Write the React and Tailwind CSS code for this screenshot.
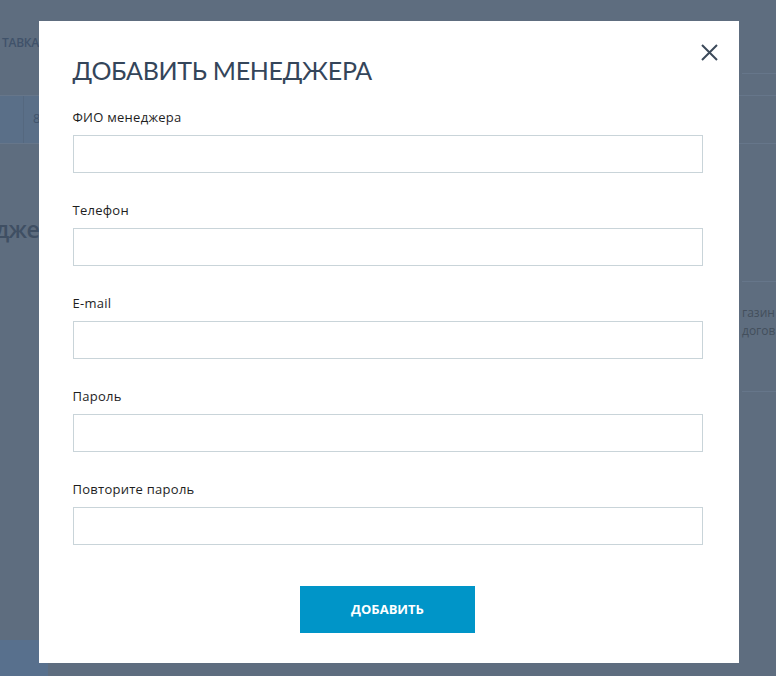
import React, { useState } from "react";

const fields = [
  { label: "ФИО менеджера", type: "text" },
  { label: "Телефон", type: "tel" },
  { label: "E-mail", type: "email" },
  { label: "Пароль", type: "password" },
  { label: "Повторите пароль", type: "password" },
];

const Field = ({ label, type }) => {
  const [value, setValue] = useState("");
  return (
    <label className="block mb-[27px]">
      <span className="block text-[13px] leading-[20px] tracking-[0.02em] text-[#1e1e1e] mb-[8px]">{label}</span>
      <input
        type={type}
        value={value}
        onChange={(e) => setValue(e.target.value)}
        className="block w-full h-[38px] border border-[#c9d4d9] bg-white px-3 text-[14px] outline-none focus:border-[#0095c8]"
      />
    </label>
  );
};

// background page, already dimmed by the overlay
const Page = () => (
  <div className="h-[676px] bg-[#5e6d7f] overflow-hidden">
    <div className="h-[95px] flex">
      <div className="w-[39px] pt-[34px] flex justify-end">
        <span className="whitespace-nowrap text-[12px] font-semibold tracking-[-0.02em] text-[#40526a]">ТАВКА</span>
      </div>
      <div className="flex-1 flex justify-end pt-[73px]">
        <div className="w-[34px] border-t border-[#66768a]" />
      </div>
    </div>
    <div className="h-[49px] flex border-t border-b border-[#66768a]">
      <div className="w-[24px] bg-[#5a6f88] border-r border-[#55687f]" />
      <div className="w-[15px] bg-[#5a6f88] pt-[13px] pl-[9px] text-[13px] text-[#41546c]">8</div>
      <div className="flex-1" />
    </div>
    <div className="flex">
      <div className="w-[39px] pt-[70px] flex justify-end">
        <span className="whitespace-nowrap text-[23px] leading-[30px] font-semibold tracking-[-0.03em] text-[#3f4f63]">дже</span>
      </div>
      <div className="flex-1 flex justify-end">
        <div className="w-[34px] mt-[137px] border-t border-b border-[#66768a] h-[111px] pt-[22px] text-[12px] leading-[18px] text-[#434f5c] whitespace-nowrap">
          <div>газин</div>
          <div>догов</div>
        </div>
      </div>
    </div>
  </div>
);

export default function App() {
  return (
    <div className="relative h-[676px] overflow-hidden" style={{ fontFamily: '"Open Sans", "Liberation Sans", sans-serif' }}>
      <Page />
      <div className="absolute bottom-0 left-0 w-[48px] h-[36px] bg-[#58708d]" />
      <div className="absolute inset-0 flex justify-center pt-[21px]">
        <div className="relative w-[700px] h-[642px] bg-white pl-[34px] pr-[36px] pt-[34px] ml-[1px]">
          <button className="absolute top-[21px] right-[19px] w-[20px] h-[20px] flex items-center justify-center text-[#3c4a5a]" aria-label="Закрыть">
            <svg width="17" height="17" viewBox="0 0 17 17" fill="none" stroke="currentColor" strokeWidth="2">
              <path d="M1 1L16 16M16 1L1 16" />
            </svg>
          </button>
          <h2 className="text-[25px] leading-[31px] tracking-[-0.3px] text-[#34455a] uppercase mb-[21px]" style={{ fontFamily: "Lato, sans-serif" }}>
            Добавить менеджера
          </h2>
          {fields.map((f) => (
            <Field key={f.label} {...f} />
          ))}
          <div className="flex justify-center pt-[14px]">
            <button className="w-[175px] h-[47px] bg-[#0095c8] text-white text-[13px] font-bold uppercase">
              Добавить
            </button>
          </div>
        </div>
      </div>
    </div>
  );
}
